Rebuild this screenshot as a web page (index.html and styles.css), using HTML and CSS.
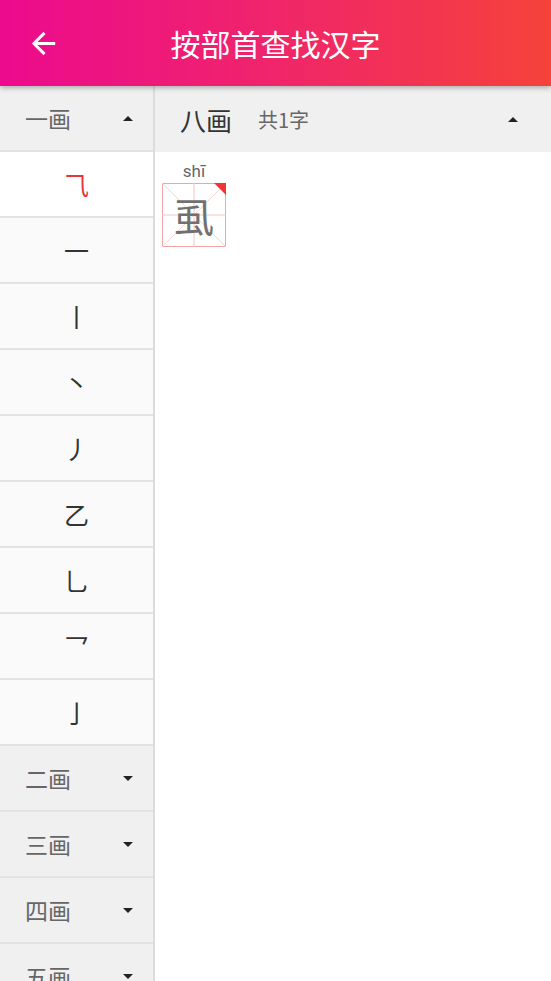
FILE: index.html
```html
<!DOCTYPE html>
<html lang="zh">
<head>
<meta charset="utf-8">
<link rel="stylesheet" href="styles.css">
</head>
<body>
<header class="topbar">
  <svg class="back" viewBox="0 0 24 24" width="35" height="35"><path d="M20 11H7.83l5.59-5.59L12 4l-8 8 8 8 1.41-1.41L7.83 13H20v-2z" fill="#fff"/></svg>
  <div class="title">按部首查找汉字</div>
</header>
<main class="main">
  <aside class="side">
    <div class="group"><span class="glabel">一画</span><span class="tri up"></span></div>
    <div class="row sel">⺄</div>
    <div class="row">一</div>
    <div class="row">丨</div>
    <div class="row">丶</div>
    <div class="row">丿</div>
    <div class="row">乙</div>
    <div class="row">乚</div>
    <div class="row">乛</div>
    <div class="row">亅</div>
    <div class="group"><span class="glabel">二画</span><span class="tri down"></span></div>
    <div class="group"><span class="glabel">三画</span><span class="tri down"></span></div>
    <div class="group"><span class="glabel">四画</span><span class="tri down"></span></div>
    <div class="group"><span class="glabel">五画</span><span class="tri down"></span></div>
  </aside>
  <section class="content">
    <div class="chead">
      <span class="ctitle">八画</span>
      <span class="ccount">共1字</span>
      <span class="tri up rtri"></span>
    </div>
    <div class="chars">
      <div class="card">
        <div class="py">shī</div>
        <div class="box">
          <svg class="grid" viewBox="0 0 64 64" width="64" height="64">
            <rect x="0.5" y="0.5" width="63" height="63" fill="#fff" stroke="#f0a4a4" stroke-width="1"/>
            <line x1="0" y1="0" x2="64" y2="64" stroke="#f8d4d4" stroke-width="1"/>
            <line x1="64" y1="0" x2="0" y2="64" stroke="#f8d4d4" stroke-width="1"/>
            <line x1="32" y1="0" x2="32" y2="64" stroke="#f5c4c4" stroke-width="1"/>
            <line x1="0" y1="32" x2="64" y2="32" stroke="#f5c4c4" stroke-width="1"/>
            <polygon points="52,0 64,0 64,12" fill="#f03535"/>
          </svg>
          <span class="hz">虱</span>
        </div>
      </div>
    </div>
  </section>
</main>
</body>
</html>
```
FILE: styles.css
```css
* { box-sizing: border-box; }
html, body { margin: 0; padding: 0; }
body {
  width: 551px;
  height: 981px;
  overflow: hidden;
  font-family: Roboto, "Noto Sans CJK SC", sans-serif;
  background: #fff;
}
.topbar {
  position: relative;
  z-index: 2;
  height: 86px;
  display: flex;
  align-items: center;
  background: linear-gradient(90deg, #ec0a8e 0%, #f0256a 50%, #f5423a 100%);
  box-shadow: 0 2px 5px rgba(0,0,0,0.28);
}
.back { margin-left: 26px; flex: none; }
.title {
  flex: 1;
  text-align: center;
  margin-right: 61px;
  color: #fff;
  font-family: "Noto Sans CJK SC", sans-serif;
  font-size: 30px;
  line-height: 1;
}
.main {
  display: flex;
  height: 895px;
}
.side {
  width: 155px;
  flex: none;
  border-right: 2px solid #dcdcdc;
  background: #f0f0f0;
  overflow: hidden;
}
.group {
  height: 66px;
  border-bottom: 2px solid #e2e2e2;
  background: #f0f0f0;
  display: flex;
  align-items: center;
  padding-left: 25px;
  padding-right: 20px;
}
.glabel {
  flex: 1;
  font-family: "Noto Sans CJK SC", sans-serif;
  font-size: 23px;
  color: #666;
}
.tri {
  width: 0; height: 0;
  border-left: 5px solid transparent;
  border-right: 5px solid transparent;
}
.tri.up { border-bottom: 5px solid #222; }
.tri.down { border-top: 5px solid #222; }
.row {
  height: 66px;
  border-bottom: 2px solid #e2e2e2;
  background: #fafafa;
  display: flex;
  align-items: center;
  justify-content: center;
  font-family: "Noto Sans CJK SC", sans-serif;
  font-size: 25px;
  color: #333;
}
.row.sel { background: #fff; color: #e8333a; }
.content { flex: 1; background: #fff; }
.chead {
  height: 66px;
  background: #f0f0f0;
  display: flex;
  align-items: center;
  padding-left: 25px;
  padding-right: 33px;
}
.ctitle {
  font-family: "Noto Sans CJK SC", sans-serif;
  font-size: 26px;
  color: #333;
}
.ccount {
  flex: 1;
  margin-left: 26px;
  font-family: "Noto Sans CJK SC", sans-serif;
  font-size: 20px;
  color: #666;
}
.chars { padding: 8px 0 0 7px; display: flex; }
.card { width: 64px; display: flex; flex-direction: column; align-items: center; }
.py {
  font-family: Roboto, sans-serif;
  font-size: 17px;
  color: #666;
  line-height: 23px;
}
.box { position: relative; width: 64px; height: 64px; }
.grid { display: block; }
.hz {
  position: absolute;
  left: 0; top: 0;
  width: 64px; height: 64px;
  display: flex;
  align-items: center;
  justify-content: center;
  font-family: "Noto Sans CJK SC", sans-serif;
  font-size: 40px;
  color: #707070;
  line-height: 1;
}
```
